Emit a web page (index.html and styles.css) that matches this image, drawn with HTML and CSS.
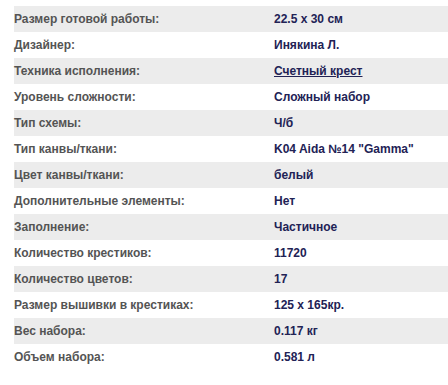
FILE: index.html
```html
<!DOCTYPE html>
<html>
<head>
<meta charset="utf-8">
<link rel="stylesheet" href="styles.css">
</head>
<body>
<div class="props">
  <div class="row alt"><div class="label">Размер готовой работы:</div><div class="value">22.5 x 30 см</div></div>
  <div class="row"><div class="label">Дизайнер:</div><div class="value">Инякина Л.</div></div>
  <div class="row alt"><div class="label">Техника исполнения:</div><div class="value"><a class="link" href="#">Счетный крест</a></div></div>
  <div class="row"><div class="label">Уровень сложности:</div><div class="value">Сложный набор</div></div>
  <div class="row alt"><div class="label">Тип схемы:</div><div class="value">Ч/б</div></div>
  <div class="row"><div class="label">Тип канвы/ткани:</div><div class="value">K04 Aida №14 "Gamma"</div></div>
  <div class="row alt"><div class="label">Цвет канвы/ткани:</div><div class="value">белый</div></div>
  <div class="row"><div class="label">Дополнительные элементы:</div><div class="value">Нет</div></div>
  <div class="row alt"><div class="label">Заполнение:</div><div class="value">Частичное</div></div>
  <div class="row"><div class="label">Количество крестиков:</div><div class="value">11720</div></div>
  <div class="row alt"><div class="label">Количество цветов:</div><div class="value">17</div></div>
  <div class="row"><div class="label">Размер вышивки в крестиках:</div><div class="value">125 x 165кр.</div></div>
  <div class="row alt"><div class="label">Вес набора:</div><div class="value">0.117 кг</div></div>
  <div class="row"><div class="label">Объем набора:</div><div class="value">0.581 л</div></div>
</div>
</body>
</html>
```

FILE: styles.css
```css
html, body {
  margin: 0;
  padding: 0;
  background: #ffffff;
}
body {
  font-family: "Liberation Sans", Arial, sans-serif;
  font-size: 12px;
  font-weight: bold;
}
.props {
  padding: 6px 0 0 14px;
}
.row {
  display: grid;
  grid-template-columns: 260px 1fr;
  height: 26px;
  align-items: center;
}
.row.alt {
  background: #ececec;
}
.label {
  color: #545454;
}
.value {
  color: #222255;
}
.link {
  color: #222255;
  text-decoration: underline;
}
```
